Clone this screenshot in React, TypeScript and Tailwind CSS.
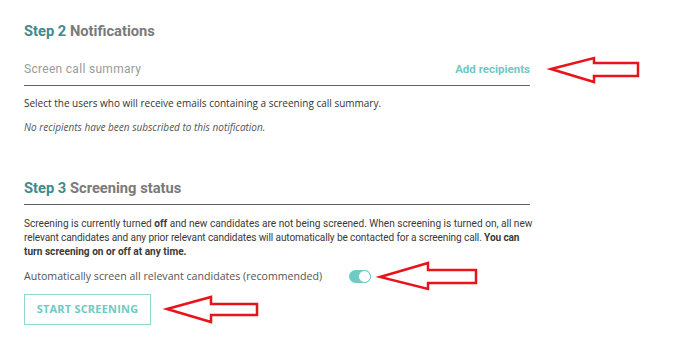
import React from 'react';

const roboto = { fontFamily: 'Roboto, "Liberation Sans", sans-serif' };
const openSans = { fontFamily: '"Open Sans", "Liberation Sans", sans-serif' };

const Arrow = ({ points }: { points: string }) => (
  <polygon points={points} fill="none" stroke="#e8141c" strokeWidth={2.5} strokeLinejoin="miter" />
);

const Toggle = ({ checked }: { checked: boolean }) => (
  <button
    className={`relative w-[22px] h-[13px] rounded-full ${checked ? 'bg-[#6ecac3]' : 'bg-gray-300'}`}
  >
    <span className="absolute right-0 top-0 w-[13px] h-[13px] rounded-full bg-white border border-[#6ecac3]" />
  </button>
);

export default function App() {
  return (
    <div className="relative w-[688px] h-[343px] bg-white overflow-hidden">
      <div className="w-[506px] ml-[24px] pt-[21px]">
        <h2 className="text-[14.7px] leading-[20px] font-bold" style={roboto}>
          <span className="text-[#3e8a8c]">Step 2</span>{' '}
          <span className="text-[#7a7a7a]">Notifications</span>
        </h2>

        <div className="mt-[18px] flex items-center justify-between border-b border-[#616161] pb-[6px]">
          <span className="text-[12px] leading-[20px] tracking-[0.3px] text-[#9a9a9a]" style={roboto}>
            Screen call summary
          </span>
          <button className="text-[11.5px] leading-[20px] font-bold text-[#72c8c2]" style={roboto}>
            Add recipients
          </button>
        </div>

        <p className="mt-[10px] text-[10px] leading-[14px] text-[#333]" style={openSans}>
          Select the users who will receive emails containing a screening call summary.
        </p>
        <p className="mt-[10px] text-[10px] leading-[14px] italic text-[#555]" style={openSans}>
          No recipients have been subscribed to this notification.
        </p>

        <h2 className="mt-[44px] text-[14.7px] leading-[20px] font-bold pb-[6px] border-b border-[#616161]" style={roboto}>
          <span className="text-[#3e8a8c]">Step 3</span>{' '}
          <span className="text-[#7a7a7a]">Screening status</span>
        </h2>

        <p className="mt-[12px] whitespace-nowrap text-[10.1px] leading-[14px] text-[#3a3a3a]" style={roboto}>
          Screening is currently turned <b>off</b> and new candidates are not being screened. When screening is turned on, all new
          <br />
          <span className="tracking-[-0.12px]">
            relevant candidates and any prior relevant candidates will automatically be contacted for a screening call.{' '}
            <b>You can</b>
          </span>
          <br />
          <b>turn screening on or off at any time.</b>
        </p>

        <div className="mt-[9px] flex items-center gap-[27px]">
          <span className="text-[10.6px] leading-[16px] text-[#555]" style={openSans}>
            Automatically screen all relevant candidates (recommended)
          </span>
          <Toggle checked />
        </div>

        <button
          className="mt-[10px] w-[127px] h-[31px] border border-[#8fd8d1] text-[11px] font-bold tracking-[0.2px] text-[#6ecac3]"
          style={openSans}
        >
          START SCREENING
        </button>
      </div>

      <svg className="absolute inset-0 pointer-events-none" width="688" height="343">
        <Arrow points="551,69 594,58 594,63 638,63 638,76 594,76 594,82" />
        <Arrow points="380,277 428,263 428,270 476,270 476,283 428,283 428,289" />
        <Arrow points="167,309 211,297 211,304 257,304 257,315 211,315 211,322" />
      </svg>
    </div>
  );
}
